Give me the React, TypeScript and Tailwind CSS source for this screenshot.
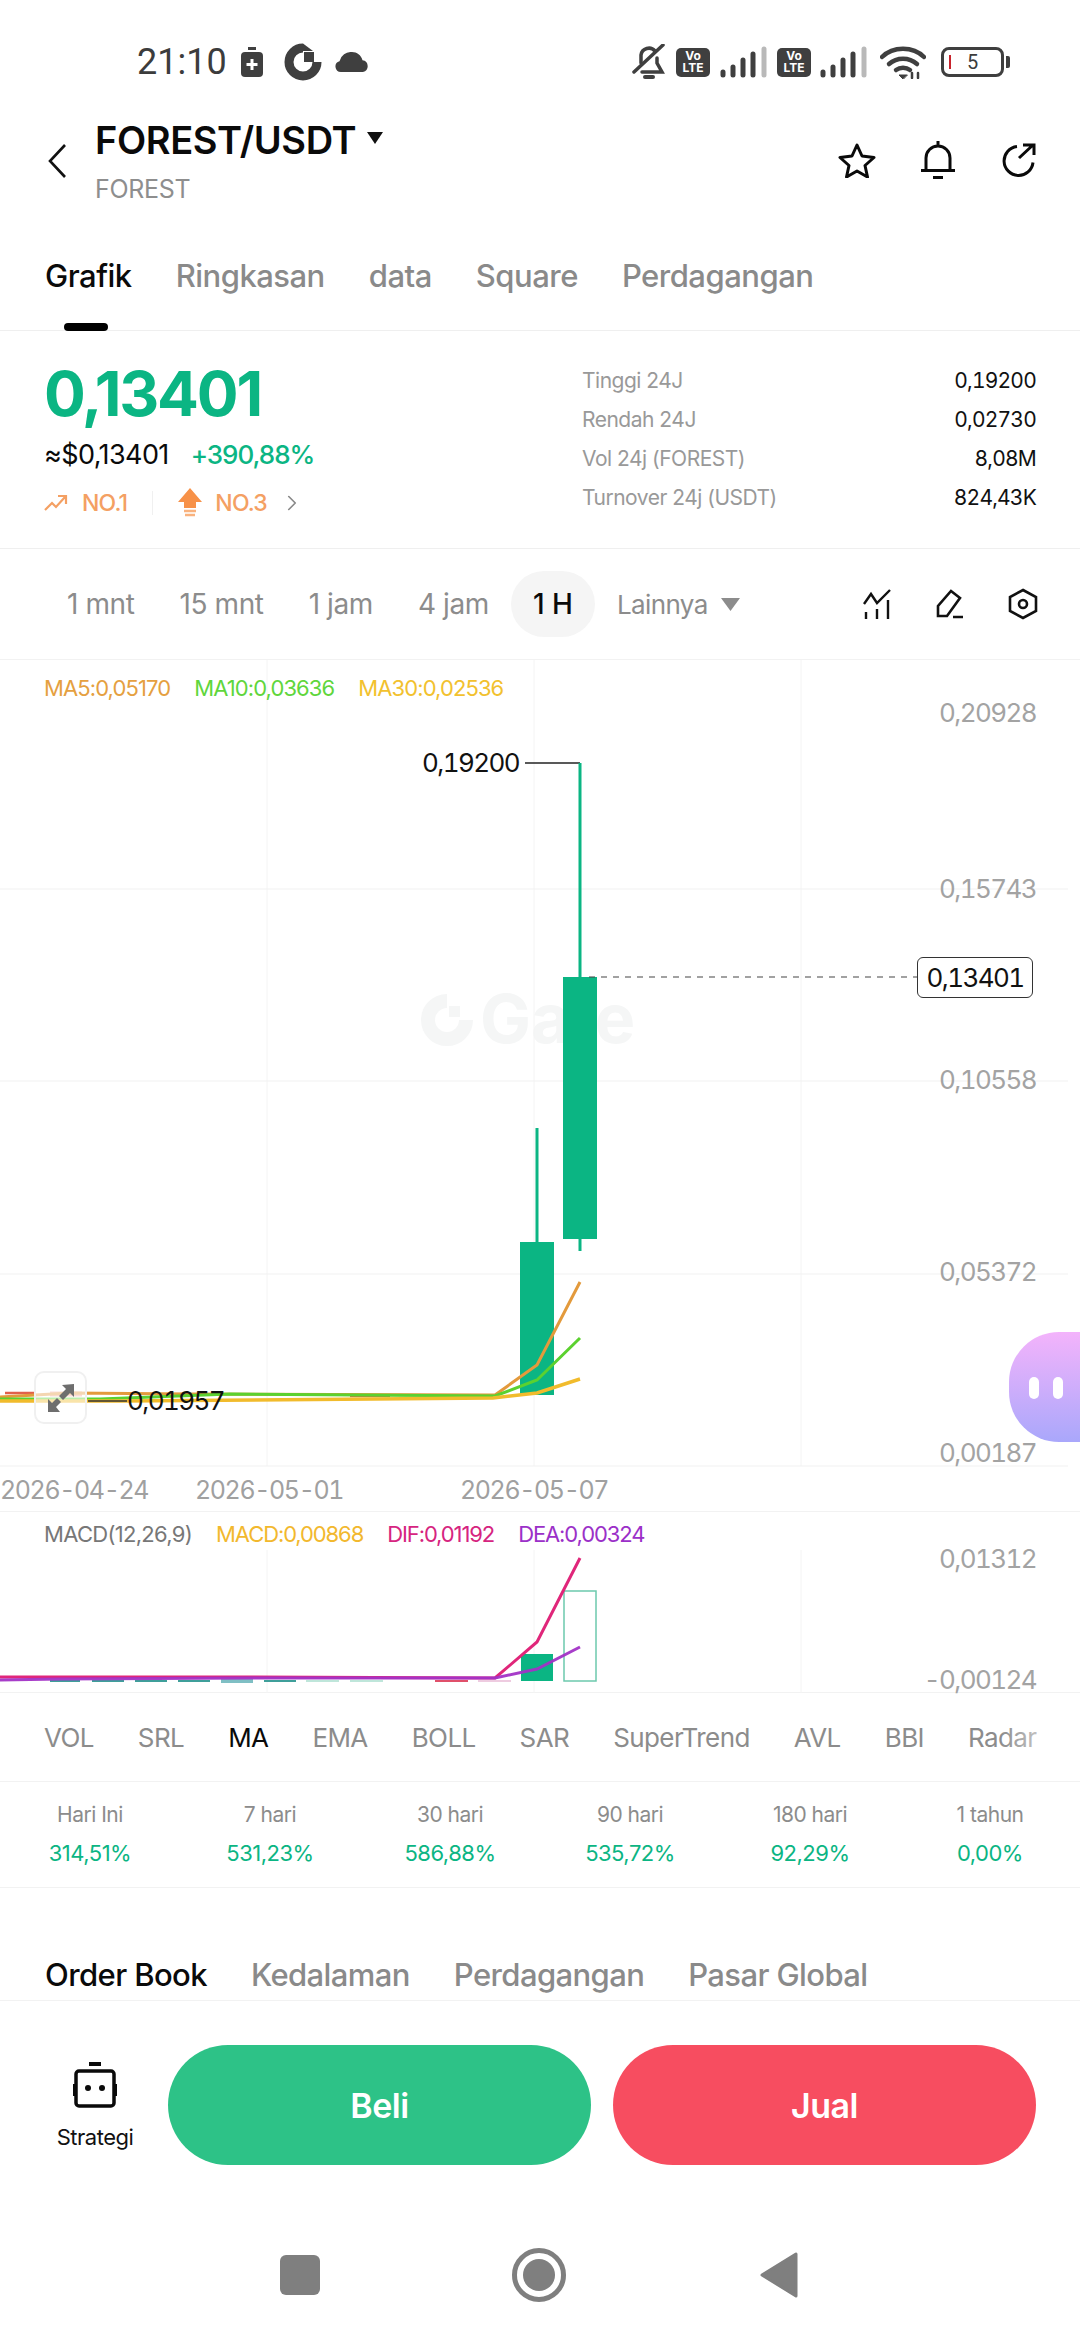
import { ChevronRight } from 'lucide-react';

const sans = { fontFamily: 'Inter, "Noto Sans", sans-serif' };

const topTabs = ['Grafik', 'Ringkasan', 'data', 'Square', 'Perdagangan'];
const stats = [
  ['Tinggi 24J', '0,19200'],
  ['Rendah 24J', '0,02730'],
  ['Vol 24j (FOREST)', '8,08M'],
  ['Turnover 24j (USDT)', '824,43K'],
];
const frames = ['1 mnt', '15 mnt', '1 jam', '4 jam'];
const indicators = ['VOL', 'SRL', 'MA', 'EMA', 'BOLL', 'SAR', 'SuperTrend', 'AVL', 'BBI', 'Radar'];
const periods = [
  ['Hari Ini', '314,51%'],
  ['7 hari', '531,23%'],
  ['30 hari', '586,88%'],
  ['90 hari', '535,72%'],
  ['180 hari', '92,29%'],
  ['1 tahun', '0,00%'],
];
const bookTabs = ['Order Book', 'Kedalaman', 'Perdagangan', 'Pasar Global'];

function Signal() {
  return (
    <svg width="47" height="32" viewBox="0 0 47 32" fill="none" strokeLinecap="round" strokeWidth="5">
      <path d="M3 29v-3M13 29v-8M23 29V14M33 29V8" stroke="#3f3f3f" />
      <path d="M44 29V3" stroke="#b9b9b9" />
    </svg>
  );
}

function VoLte() {
  return (
    <div className="flex h-[29px] w-[34px] flex-col items-center justify-center rounded-[5px] bg-[#3f3f3f] text-[12px] leading-[12px] font-bold text-white">
      <span>Vo</span>
      <span>LTE</span>
    </div>
  );
}

function StatusBar() {
  return (
    <div className="flex h-[92px] items-center justify-between pt-[32px] pr-[70px] pl-[137px]">
      <div className="flex items-center">
        <span className="text-[36px] leading-none text-[#3c3c3c]" style={{ fontFamily: 'Roboto, sans-serif' }}>21:10</span>
        <svg className="ml-[14px]" width="22" height="30" viewBox="0 0 22 30">
          <rect x="7" y="0" width="8" height="3" fill="#3f3f3f" />
          <rect x="0" y="5" width="22" height="25" rx="4" fill="#3f3f3f" />
          <path d="M11 12v11M5.500 17.500h11" stroke="#fff" strokeWidth="3" />
        </svg>
        <svg className="ml-[21px]" width="38" height="38" viewBox="0 0 38 38" fill="none">
          <path d="M19 5A14 14 0 1 0 33 19" stroke="#3f3f3f" strokeWidth="9" />
          <path d="M20 9h10v10H20z" fill="#3f3f3f" />
          <path d="M19 0.500 29 8H19z" fill="#3f3f3f" />
        </svg>
        <svg className="ml-[13px]" width="34" height="20" viewBox="0 0 34 20">
          <path d="M6 20a5.500 5.500 0 0 1-1.500-10.800A12 12 0 0 1 17 0c5 0 9 3 10.500 8.200A6 6 0 0 1 28 20z" fill="#3f3f3f" />
        </svg>
      </div>
      <div className="flex items-center">
        <svg width="34" height="36" viewBox="0 0 34 36" fill="none" stroke="#3f3f3f" strokeWidth="3.500" strokeLinecap="round">
          <path d="M9 19V11a8 8 0 0 1 14-4M25 14v5l5 9H10" />
          <path d="M2 28 31 1" />
          <path d="M13 33h8" strokeWidth="4" />
        </svg>
        <div className="ml-[10px]"><VoLte /></div>
        <div className="ml-[10px]"><Signal /></div>
        <div className="ml-[10px]"><VoLte /></div>
        <div className="ml-[9px]"><Signal /></div>
        <svg className="ml-[13px]" width="46" height="34" viewBox="0 0 46 34" fill="none" stroke="#3f3f3f" strokeWidth="4.500" strokeLinecap="round">
          <path d="M2 12C13 1 33 1 44 12" />
          <path d="M9 19c8-7 20-7 28 0" />
          <path d="M16 25c4-3 10-3 14 0" />
          <path d="M23 34l-4-4h8z" fill="#3f3f3f" strokeWidth="1" />
          <path d="M32 33v-5M38 33v-5" strokeWidth="2.500" />
        </svg>
        <div className="ml-[15px] flex items-center">
          <div className="relative flex h-[30px] w-[63px] items-center justify-center rounded-[8px] border-[3px] border-[#3f3f3f]">
            <div className="absolute top-[5px] left-[5px] h-[14px] w-[2px] bg-[#c8232c]" />
            <span className="text-[20px] leading-none text-[#3c3c3c]" style={{ fontFamily: 'Roboto, sans-serif' }}>5</span>
          </div>
          <div className="ml-[2px] h-[12px] w-[4px] rounded-r-[2px] bg-[#3f3f3f]" />
        </div>
      </div>
    </div>
  );
}

function Header() {
  return (
    <div className="flex h-[136px] items-start justify-between pr-[44px] pl-[47px]">
      <div className="flex">
        <svg className="mt-[52px]" width="20" height="34" viewBox="0 0 20 34" fill="none" stroke="#111" strokeWidth="2.600">
          <path d="M18 1 3 17l15 16" />
        </svg>
        <div className="ml-[28px] pt-[27px]">
          <div className="flex items-center">
            <span className="text-[38px] leading-[42px] font-semibold tracking-[-0.4px] text-[#0a0a0a]">FOREST/USDT</span>
            <svg className="mt-[-4px] ml-[11px]" width="16" height="12" viewBox="0 0 16 12"><path d="M0 0h16L8 12z" fill="#111" /></svg>
          </div>
          <div className="mt-[14px] text-[25px] leading-[28px] tracking-[-0.3px] text-[#8e8e8e]">FOREST</div>
        </div>
      </div>
      <div className="flex items-center pt-[49px]">
        <svg width="38" height="36" viewBox="0 0 38 36" fill="none" stroke="#0a0a0a" strokeWidth="3" strokeLinejoin="round">
          <path d="M19 3l5 11 12 1.500-9 8 2.500 11.500L19 29 8.500 35 11 23.500l-9-8L14 14z" />
        </svg>
        <svg className="ml-[45px]" width="34" height="38" viewBox="0 0 34 38" fill="none" stroke="#0a0a0a" strokeWidth="3">
          <path d="M5 29V17a12 12 0 0 1 24 0v12M0 29.500h34M17 0v5M12 36.500h10" />
        </svg>
        <svg className="ml-[45px]" width="36" height="34" viewBox="0 0 36 34" fill="none" stroke="#0a0a0a" strokeWidth="3">
          <path d="M17 3.500a14.500 14.500 0 1 0 16 16" />
          <path d="M19 15 33 2M23 2h11v10" />
        </svg>
      </div>
    </div>
  );
}

function TopTabs() {
  return (
    <div className="flex h-[103px] gap-[44px] border-b border-[#efefef] pl-[45px]">
      {topTabs.map((t, i) => (
        <div key={t} className="relative pt-[28px]">
          <span className={`text-[31px] leading-[40px] font-medium tracking-[-0.5px] ${i === 0 ? 'text-[#0a0a0a]' : 'text-[#8a8a8a]'}`}>{t}</span>
          {i === 0 && <div className="absolute -bottom-px left-[19px] h-[8px] w-[44px] rounded-full bg-black" />}
        </div>
      ))}
    </div>
  );
}

function PriceBlock() {
  return (
    <div className="flex h-[218px] justify-between border-b border-[#efefef] pr-[44px] pl-[44px]">
      <div className="pt-[29px]">
        <div className="text-[62px] leading-[68px] font-bold tracking-[-2.2px] text-[#0bb583]">0,13401</div>
        <div className="mt-[12px] flex items-center gap-[22px]">
          <span className="text-[27px] leading-[30px] tracking-[-0.6px] text-[#0a0a0a]">≈$0,13401</span>
          <span className="text-[26px] leading-[30px] font-medium tracking-[-1px] text-[#0bb583]">+390,88%</span>
        </div>
        <div className="mt-[18px] flex items-center text-[23px] leading-[26px] font-medium tracking-[-0.8px] text-[#f4a063]">
          <svg width="24" height="16" viewBox="0 0 24 16" fill="none" stroke="#f4a063" strokeWidth="2.200">
            <path d="M1 15 8 8l4 4 9-10M14 1h8v8" />
          </svg>
          <span className="ml-[14px]">NO.1</span>
          <div className="mx-[25px] h-[24px] w-px bg-[#f0f0f0]" />
          <svg width="24" height="30" viewBox="0 0 24 30">
            <path d="M12 0 24 14h-6v6H6v-6H0z" fill="#f79148" />
            <path d="M6 23h12M7 27h10" stroke="#f9b27e" strokeWidth="2.500" />
          </svg>
          <span className="ml-[13px]">NO.3</span>
          <ChevronRight className="ml-[12px]" size={26} strokeWidth={1.5} color="#888" />
        </div>
      </div>
      <div className="flex w-[454px] flex-col gap-[15px] pt-[38px]">
        {stats.map(([k, v]) => (
          <div key={k} className="flex h-[24px] items-center justify-between text-[21px] leading-[24px] tracking-[-0.5px]">
            <span className="text-[#999]">{k}</span>
            <span className="tracking-[-0.8px] text-[#111] tabular-nums">{v}</span>
          </div>
        ))}
      </div>
    </div>
  );
}

function Timeframes() {
  return (
    <div className="flex h-[111px] items-center border-b border-[#f2f2f2] pr-[42px] pl-[67px] text-[28px] text-[#8c8c8c]">
      <div className="flex gap-[45px] tracking-[-0.4px]">
        {frames.map(f => <span key={f}>{f}</span>)}
      </div>
      <div className="ml-[22px] flex h-[66px] w-[84px] items-center justify-center rounded-full bg-[#f5f5f5] font-medium text-[#0a0a0a]">1 H</div>
      <span className="ml-[22px] text-[26px] tracking-[-0.6px]">Lainnya</span>
      <svg className="ml-[13px]" width="19" height="13" viewBox="0 0 19 13"><path d="M0 0h19l-9.500 13z" fill="#8c8c8c" /></svg>
      <div className="ml-auto flex items-center gap-[44px]">
        <svg width="29" height="30" viewBox="0 0 29 30" fill="none" stroke="#111" strokeWidth="2.400">
          <path d="M1 15 8 5l6 9L27 1" />
          <path d="M3 30v-7M14 30V20M25 30V11" />
        </svg>
        <svg width="28" height="30" viewBox="0 0 28 30" fill="none" stroke="#111" strokeWidth="2.600">
          <path d="M2 27V17L15 2l9 7-13 18zM17 28h10" />
        </svg>
        <svg width="30" height="32" viewBox="0 0 30 32" fill="none" stroke="#111" strokeWidth="2.600">
          <path d="M15 2 28 9v14l-13 7-13-7V9z" />
          <circle cx="15" cy="16" r="4" />
        </svg>
      </div>
    </div>
  );
}

// page y coordinates are kept in the svg through viewBox, easier to compare with the reference
function MainChart() {
  const axis = [['0,20928', 713], ['0,15743', 889], ['0,10558', 1080], ['0,05372', 1272], ['0,00187', 1453]] as const;
  return (
    <div className="relative h-[852px] border-b border-[#f2f2f2]">
      <span className="absolute top-[324px] left-[480px] text-[68px] leading-none font-bold text-[#f5f6f6]">Gate</span>
      <svg className="absolute inset-0" width="1080" height="852" viewBox="0 660 1080 852" fill="none">
        <path d="M267 660v806M534 660v806M801 660v806" stroke="#f4f4f4" />
        <path d="M0 889h1068M0 1081h1068M0 1274h1068M0 1466h1068" stroke="#f1f1f1" />
        <path d="M447 1001A19 19 0 1 0 466 1020" stroke="#f5f6f6" strokeWidth="14" />
        <path d="M449 1006h11v11h-11z" fill="#f5f6f6" />
        <path d="M525 763h55" stroke="#222" strokeWidth="1.500" />
        <path d="M580 763v214M537 1128v114M580 1239v12" stroke="#0bb583" strokeWidth="3" />
        <rect x="563" y="977" width="34" height="262" fill="#0bb583" />
        <rect x="520" y="1242" width="34" height="153" fill="#0bb583" />
        <path d="M589 977h328" stroke="#444" strokeDasharray="6 6" strokeWidth="1.200" />
        <path d="M5 1393h30M350 1396h40" stroke="#e0604a" strokeWidth="2.500" />
        <path d="M50 1394h32" stroke="#f4a6a0" strokeWidth="5" />
        <path d="M0 1397 70 1393l120 1 305 1 42-30 43-83" stroke="#e39a3c" strokeWidth="3" />
        <path d="M0 1399 100 1399l130-5 265 2 42-16 43-42" stroke="#5bd12f" strokeWidth="3" />
        <path d="M0 1401h120l373-3 44-5 43-14" stroke="#f1bb2c" strokeWidth="3.500" />
        <path d="M88 1401h39" stroke="#333" strokeWidth="1.500" />
      </svg>
      <div className="absolute top-[16px] left-[44px] flex gap-[24px] text-[22px] leading-[24px] tracking-[-0.9px]">
        <span className="text-[#e5a040]">MA5:0,05170</span>
        <span className="text-[#5fd63c]">MA10:0,03636</span>
        <span className="text-[#f2c12e]">MA30:0,02536</span>
      </div>
      {axis.map(([t, y]) => (
        <span key={t} className="absolute right-[44px] text-[26px] leading-[26px] tracking-[-1.6px] text-[#a3a3a3] tabular-nums" style={{ top: y - 660 - 13 }}>{t}</span>
      ))}
      <span className="absolute top-[90px] left-[422px] text-[26px] leading-[26px] tracking-[-1.6px] text-[#111] tabular-nums">0,19200</span>
      <span className="absolute top-[728px] left-[127px] text-[26px] leading-[26px] tracking-[-1.6px] text-[#111] tabular-nums">0,01957</span>
      <div className="absolute top-[297px] right-[47px] flex h-[41px] w-[116px] items-center justify-center rounded-[6px] border border-[#333] bg-white text-[26px] tracking-[-1.6px] text-[#111] tabular-nums">0,13401</div>
      <div className="absolute top-[711px] left-[34px] flex h-[53px] w-[53px] items-center justify-center rounded-[10px] border-2 border-[#f0f0f0] bg-white/60">
        <svg width="28" height="28" viewBox="0 0 28 28" fill="#6e6e6e">
          <path d="M27 0v13l-4-4-7 7-4-4 7-7-4-4zM1 28V15l4 4 5-5 4 4-5 5 4 5z" />
        </svg>
      </div>
      <div className="absolute top-[672px] -right-px h-[110px] w-[72px] rounded-l-[50px] bg-linear-to-b from-[#f3b3fb] to-[#a9a7fb]">
        <div className="mt-[45px] ml-[20px] flex gap-[14px]">
          <div className="h-[22px] w-[10px] rounded-full bg-white" />
          <div className="h-[22px] w-[10px] rounded-full bg-white" />
        </div>
      </div>
      <div className="absolute top-[817px] left-0 flex text-[25px] leading-[26px] tracking-[-1.4px] text-[#a0a0a0] tabular-nums">
        <span className="w-[195px]">2026-04-24</span>
        <span className="w-[265px]">2026-05-01</span>
        <span>2026-05-07</span>
      </div>
    </div>
  );
}

function MacdChart() {
  return (
    <div className="relative h-[181px] border-b border-[#f2f2f2]">
      <svg className="absolute inset-0" width="1080" height="181" viewBox="0 1512 1080 181" fill="none">
        <path d="M267 1550v143M534 1550v143M801 1550v143" stroke="#f4f4f4" />
        <path d="M50 1681h30M92 1681h32M135 1681h32M178 1681h32M264 1681h32" stroke="#3f9f9a" strokeWidth="2" />
        <path d="M221 1681h32" stroke="#7fbfc4" strokeWidth="4" />
        <path d="M306 1681h33M350 1681h33" stroke="#bfe6da" strokeWidth="2" />
        <path d="M435 1681h33" stroke="#e0506a" strokeWidth="2" />
        <path d="M478 1681h33" stroke="#eecbe0" strokeWidth="2" />
        <rect x="521" y="1654" width="32" height="27" fill="#0bb583" />
        <rect x="564" y="1591" width="32" height="90" stroke="#6cc9ad" strokeWidth="1.500" />
        <path d="M0 1677 250 1677l245 1 42-36 43-84" stroke="#e0267a" strokeWidth="3" />
        <path d="M0 1680 60 1679 250 1678l245 0 42-9 43-22" stroke="#a233c6" strokeWidth="3" opacity="0.95" />
      </svg>
      <div className="absolute top-[10px] left-[44px] flex gap-[24px] text-[22px] leading-[24px] tracking-[-1.1px]">
        <span className="tracking-[-0.7px] text-[#777]">MACD(12,26,9)</span>
        <span className="text-[#f2b82e]">MACD:0,00868</span>
        <span className="text-[#d6247f]">DIF:0,01192</span>
        <span className="text-[#9b30c8]">DEA:0,00324</span>
      </div>
      <span className="absolute top-[34px] right-[44px] text-[26px] leading-[26px] tracking-[-1.6px] text-[#a3a3a3] tabular-nums">0,01312</span>
      <span className="absolute top-[155px] right-[44px] text-[26px] leading-[26px] tracking-[-1.6px] text-[#a3a3a3] tabular-nums">-0,00124</span>
    </div>
  );
}

function Indicators() {
  return (
    <div className="relative flex h-[89px] items-center gap-[44px] overflow-hidden border-b border-[#f2f2f2] pl-[44px] text-[26px] tracking-[-0.6px] whitespace-nowrap text-[#8c8c8c]">
      {indicators.map(t => <span key={t} className={t === 'MA' ? 'text-[#0a0a0a]' : ''}>{t}</span>)}
      <div className="absolute top-0 right-0 bottom-0 w-[80px] bg-linear-to-r from-white/0 to-white" />
    </div>
  );
}

function Periods() {
  return (
    <div className="grid h-[106px] grid-cols-6 border-b border-[#f2f2f2] pt-[21px] text-center text-[21px] leading-[24px] tracking-[-0.5px]">
      {periods.map(([k, v]) => (
        <div key={k}>
          <div className="text-[#8c8c8c]">{k}</div>
          <div className="mt-[14px] text-[22px] tracking-[-0.5px] text-[#0bb583]">{v}</div>
        </div>
      ))}
    </div>
  );
}

function BookTabs() {
  return (
    <div className="mt-[52px] flex h-[61px] gap-[44px] border-b border-[#f2f2f2] pt-[17px] pl-[45px] text-[31px] leading-[36px] font-medium tracking-[-0.6px] text-[#8a8a8a]">
      {bookTabs.map((t, i) => <span key={t} className={i === 0 ? 'text-[#0a0a0a]' : ''}>{t}</span>)}
    </div>
  );
}

function ActionBar() {
  return (
    <div className="flex items-center gap-[22px] pt-[44px] pr-[44px] pl-[44px]">
      <div className="flex w-[102px] flex-col items-center">
        <svg width="46" height="46" viewBox="0 0 46 46" fill="none" stroke="#0a0a0a" strokeWidth="3.500">
          <path d="M17 2h12" strokeWidth="4" />
          <rect x="4" y="9" width="38" height="35" rx="3" />
          <path d="M2 22v12M44 22v12" strokeWidth="2" />
          <circle cx="16" cy="26" r="3" fill="#0a0a0a" stroke="none" />
          <circle cx="30" cy="26" r="3" fill="#0a0a0a" stroke="none" />
        </svg>
        <span className="mt-[17px] text-[22px] leading-[24px] tracking-[-0.5px] text-[#111]">Strategi</span>
      </div>
      <div className="flex h-[120px] w-[423px] items-center justify-center rounded-full bg-[#2dc287] text-[34px] font-semibold tracking-[-0.5px] text-white">Beli</div>
      <div className="flex h-[120px] w-[423px] items-center justify-center rounded-full bg-[#f74d60] text-[34px] font-semibold tracking-[-0.5px] text-white">Jual</div>
    </div>
  );
}

function NavBar() {
  return (
    <div className="mt-[83px] flex items-center pl-[280px]">
      <div className="h-[40px] w-[40px] rounded-[6px] bg-[#7f7f7f]" />
      <div className="ml-[192px] flex h-[54px] w-[54px] items-center justify-center rounded-full border-[5px] border-[#7f7f7f]">
        <div className="h-[32px] w-[32px] rounded-full bg-[#7f7f7f]" />
      </div>
      <svg className="ml-[194px]" width="38" height="46" viewBox="0 0 38 46">
        <path d="M36 2v42L2 23z" fill="#7f7f7f" stroke="#7f7f7f" strokeWidth="3" strokeLinejoin="round" />
      </svg>
    </div>
  );
}

export default function App() {
  return (
    <div className="h-[2340px] w-[1080px] overflow-hidden bg-white" style={sans}>
      <StatusBar />
      <Header />
      <TopTabs />
      <PriceBlock />
      <Timeframes />
      <MainChart />
      <MacdChart />
      <Indicators />
      <Periods />
      <BookTabs />
      <ActionBar />
      <NavBar />
    </div>
  );
}
